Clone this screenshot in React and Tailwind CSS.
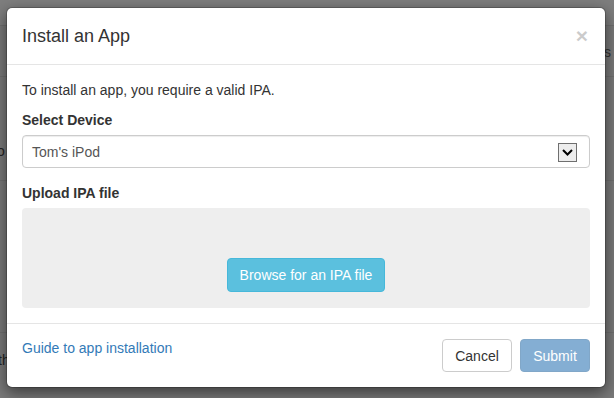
import React from "react";

const Backdrop = () => {
  return (
    <div className="absolute inset-0 bg-[#7a7a7a] text-[14px] text-[#232323] overflow-hidden">
      <div className="h-[26px] bg-[#7e7e7e] border-b border-[#707070]"></div>
      <div className="h-[51px] border-b border-[#707070] flex items-center justify-end pr-[3px] pt-[2px]">
        <span className="text-[#333]">s</span>
      </div>
      <div className="h-[104px] border-b border-[#707070] flex items-center -ml-[3px] pt-[46px]">
        <span>o</span>
      </div>
      <div className="h-[152px] border-b border-[#707070]"></div>
      <div className="h-[65px] flex items-center -ml-[2px] pb-[10px]">
        <span>th</span>
      </div>
    </div>
  );
};

const App = () => {
  return (
    <div
      className="relative w-[614px] h-[398px] overflow-hidden"
      style={{ fontFamily: '"Liberation Sans", Arial, sans-serif' }}
    >
      <Backdrop />

      {/* modal */}
      <div className="absolute left-[6px] top-[7px] w-[600px] bg-white bg-clip-padding border border-black/20 rounded-[6px] shadow-[0_5px_15px_rgba(0,0,0,0.5)] text-[14px] leading-[20px] text-[#333]">
        <div className="flex justify-between items-start px-[15px] py-[15px] border-b border-[#e5e5e5]">
          <h4 className="text-[18px] leading-[26px] text-[#333]">Install an App</h4>
          <button className="text-[21px] leading-[21px] font-bold text-black opacity-20 mt-[2px] mr-[2px]">×</button>
        </div>

        <div className="px-[15px] pt-[15px] pb-[15px]">
          <p className="mb-[10px]">To install an app, you require a valid IPA.</p>

          <div className="mb-[15px]">
            <label className="block font-bold mb-[5px]">Select Device</label>
            <div className="h-[33px] flex items-center justify-between border border-[#ccc] rounded-[4px] pl-[9px] pr-[12px] text-[#555] shadow-[inset_0_1px_1px_rgba(0,0,0,0.075)]">
              <span>Tom's iPod</span>
              <span className="w-[19px] h-[19px] flex items-center justify-center border border-[#6f6f6f] bg-[#ededed] mt-[2px]">
                <svg width="11" height="7" viewBox="0 0 11 7">
                  <path d="M1 1 L5.5 5.5 L10 1" fill="none" stroke="#000" strokeWidth="2" />
                </svg>
              </span>
            </div>
          </div>

          <label className="block font-bold mb-[5px]">Upload IPA file</label>
          <div className="h-[100px] bg-[#eee] rounded-[4px] flex items-end justify-center pb-[16px]">
            <button className="h-[34px] px-[12px] bg-[#5bc0de] border border-[#46b8da] rounded-[4px] text-white">
              Browse for an IPA file
            </button>
          </div>
        </div>

        <div className="flex justify-between items-start px-[15px] py-[15px] border-t border-[#e5e5e5]">
          <a className="text-[#337ab7] mt-[-1px]">Guide to app installation</a>
          <div className="flex gap-[8px]">
            <button className="h-[33px] w-[70px] bg-white border border-[#ccc] rounded-[4px] text-[#333]">Cancel</button>
            <button className="h-[33px] w-[70px] bg-[#337ab7] border border-[#2e6da4] rounded-[4px] text-white opacity-60">Submit</button>
          </div>
        </div>
      </div>
    </div>
  );
};

export default App;
